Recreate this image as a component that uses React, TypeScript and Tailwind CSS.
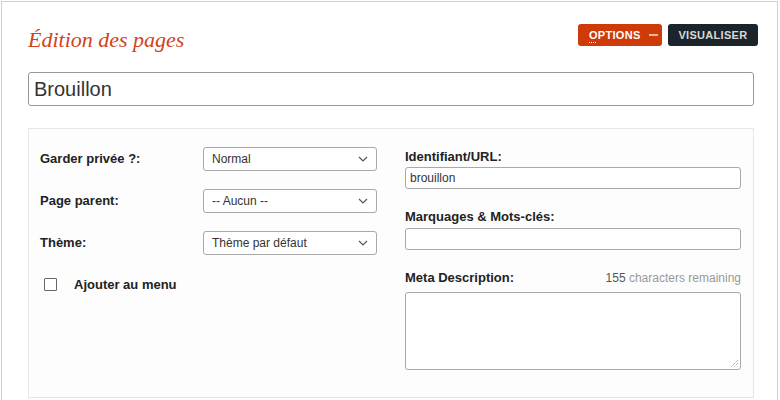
import React from "react";

const Chevron = () => (
  <svg width="10" height="6" viewBox="0 0 10 6" className="absolute right-[8px] top-1/2 -translate-y-1/2" fill="none">
    <path d="M1 1l4 4 4-4" stroke="#555" strokeWidth="1.2" />
  </svg>
);

const Select = ({ value }: { value: string }) => (
  <div className="relative w-[174px] h-[24px] border border-[#a9a9a9] rounded-[3px] bg-white flex items-center pl-[8px] text-[12px] text-[#333]">
    {value}
    <Chevron />
  </div>
);

export default function App() {
  return (
    <div className="w-[780px] h-[400px] bg-white overflow-hidden" style={{ fontFamily: '"Liberation Sans", Arial, sans-serif' }}>
      <div className="ml-px mt-px w-[777px] h-[410px] border border-[#d0d0d0] bg-white pl-[26px] pr-[23px]">
        <div className="flex items-center justify-between h-[70px] pt-[4px]">
          <h1 className="text-[22px] italic text-[#d0431a]" style={{ fontFamily: '"Liberation Serif", "DejaVu Serif", serif' }}>
            Édition des pages
          </h1>
          <div className="flex gap-[6px] mr-[-4px] -mt-[8px]">
            <div className="w-[84px] h-[22px] bg-[#cf3a09] rounded-[3px] flex items-center pl-[11px] gap-[8px] text-white text-[11px] font-bold tracking-[0.3px]">
              <span>
                <span className="underline decoration-dotted underline-offset-[3px]">O</span>PTIONS
              </span>
              <span className="block w-[9px] h-[2px] bg-[#f3b5a0]" />
            </div>
            <div className="w-[90px] h-[22px] bg-[#1b242a] rounded-[3px] flex items-center justify-center text-[#d8d8d8] text-[11px] font-bold tracking-[0.3px]">
              VISUALISER
            </div>
          </div>
        </div>
        <div className="h-[34px] border border-[#999] rounded-[3px] flex items-center pl-[5px] text-[20px] text-[#333]">
          Brouillon
        </div>
        <div className="mt-[22px] h-[270px] border border-[#e6e6e6] bg-[#fdfdfd] flex pl-[11px] pt-[18px]">
          <div className="w-[337px] flex flex-col gap-[18px]">
            <div className="flex items-center">
              <span className="w-[163px] text-[13px] font-bold text-[#222]">Garder privée ?:</span>
              <Select value="Normal" />
            </div>
            <div className="flex items-center">
              <span className="w-[163px] text-[13px] font-bold text-[#222]">Page parent:</span>
              <Select value="-- Aucun --" />
            </div>
            <div className="flex items-center">
              <span className="w-[163px] text-[13px] font-bold text-[#222]">Thème:</span>
              <Select value="Thème par défaut" />
            </div>
            <div className="flex items-center mt-[2px] pl-[4px]">
              <span className="block w-[13px] h-[13px] border border-[#666] bg-white rounded-[1px]" />
              <span className="ml-[17px] text-[13px] font-bold text-[#222]">Ajouter au menu</span>
            </div>
          </div>
          <div className="ml-[28px] w-[336px] flex flex-col">
            <span className="text-[13px] font-bold text-[#222] leading-[16px] mt-[2px]">Identifiant/URL:</span>
            <div className="mt-[2px] h-[22px] border border-[#a9a9a9] rounded-[3px] bg-white flex items-center pl-[4px] text-[12px] text-[#333]">
              brouillon
            </div>
            <span className="mt-[20px] text-[13px] font-bold text-[#222] leading-[16px]">Marquages &amp; Mots-clés:</span>
            <div className="mt-[3px] h-[22px] border border-[#a9a9a9] rounded-[3px] bg-white" />
            <div className="mt-[20px] flex items-center justify-between leading-[16px]">
              <span className="text-[13px] font-bold text-[#222]">Meta Description:</span>
              <span className="text-[12px] text-[#999]">
                <span className="text-[#555]">155</span> characters remaining
              </span>
            </div>
            <div className="relative mt-[6px] h-[78px] border border-[#a9a9a9] rounded-[3px] bg-white">
              <svg width="8" height="8" viewBox="0 0 8 8" className="absolute right-[2px] bottom-[2px]">
                <path d="M8 1L1 8M8 4L4 8" stroke="#888" strokeWidth="1" strokeDasharray="1 1" />
              </svg>
            </div>
          </div>
        </div>
      </div>
    </div>
  );
}
